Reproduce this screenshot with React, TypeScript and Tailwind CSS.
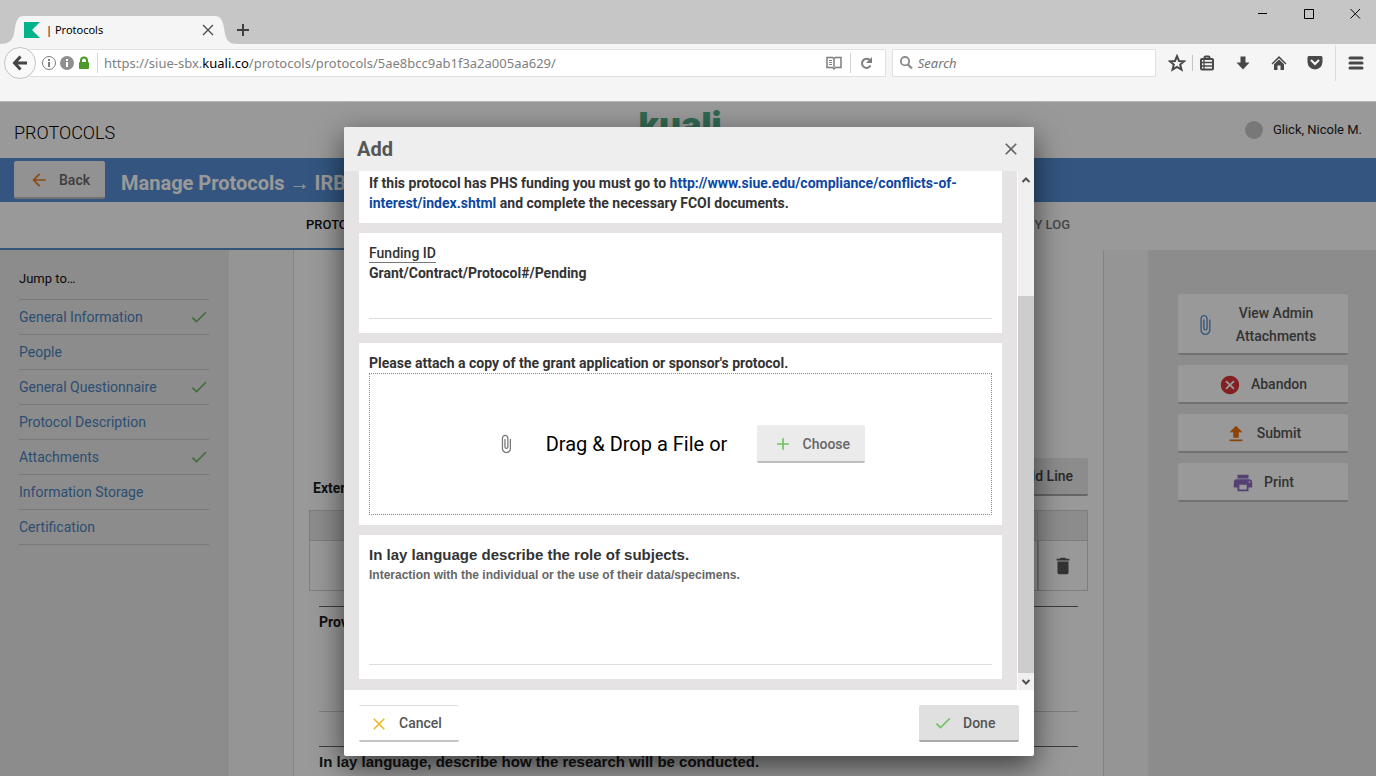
import type { ReactNode } from 'react';
import {
  MdAdd,
  MdArrowBack,
  MdAttachFile,
  MdCancel,
  MdCheck,
  MdClose,
  MdDelete,
  MdPrint,
  MdUpload,
} from 'react-icons/md';

const sections = [
  { name: 'General Information', done: true },
  { name: 'People', done: false },
  { name: 'General Questionnaire', done: true },
  { name: 'Protocol Description', done: false },
  { name: 'Attachments', done: true },
  { name: 'Information Storage', done: false },
  { name: 'Certification', done: false },
];

function BrowserTabs() {
  return (
    <div className="flex h-11 items-end justify-between bg-[#c6c6c6]">
      <div className="flex h-7 items-center">
        <svg className="h-7 w-6" viewBox="0 0 24 28" fill="#f5f5f5">
          <path d="M0 28C9 28 13 25 14.500 15C16 4 18 0 24 0V28Z" />
        </svg>
        <div className="flex h-7 w-[190px] items-center bg-[#f5f5f5]">
          <svg className="h-4 w-4" viewBox="0 0 16 16" fill="#00b388">
            <path d="M0 0H16L8 8L16 16H0Z" />
          </svg>
          <span className="ml-1.5 flex-1 text-[11px] text-black">| Protocols</span>
          <button aria-label="Close tab">
            <svg className="h-3 w-3" viewBox="0 0 12 12" stroke="#4a4a4a" strokeWidth="1.300">
              <path d="M1 1L11 11M11 1L1 11" />
            </svg>
          </button>
        </div>
        <svg className="h-7 w-6" viewBox="0 0 24 28" fill="#f5f5f5">
          <path d="M24 28C15 28 12 25 10.500 15C9 4 7 0 0 0V28Z" />
        </svg>
        <button aria-label="New tab" className="-ml-0.5">
          <svg className="h-3.5 w-3.5" viewBox="0 0 14 14" stroke="#3f3f3f" strokeWidth="2">
            <path d="M7 1V13M1 7H13" />
          </svg>
        </button>
      </div>
      <div className="flex items-center gap-8 self-start pt-2 pr-3.5">
        <button aria-label="Minimize">
          <svg className="h-3 w-3.5" viewBox="0 0 14 12" stroke="#000">
            <path d="M2 5.500H11" />
          </svg>
        </button>
        <button aria-label="Maximize">
          <svg className="h-3 w-3.5" viewBox="0 0 14 12" stroke="#000" fill="none">
            <path d="M2.500 1.500H11.500V10.500H2.500Z" />
          </svg>
        </button>
        <button aria-label="Close">
          <svg className="h-3 w-3.5" viewBox="0 0 14 12" stroke="#000">
            <path d="M2.500 1L12 10.500M12 1L2.500 10.500" />
          </svg>
        </button>
      </div>
    </div>
  );
}

function AddressBar() {
  return (
    <div className="flex h-[58px] items-start border-b border-[#b5b5b5] bg-[#f5f5f5] pr-3 text-[14px]">
      <div className="flex flex-1 items-center pt-[3px] pl-1">
        <button
          aria-label="Go back"
          className="z-10 flex h-8 w-8 items-center justify-center rounded-full border border-[#c4c4c4] bg-[#f9f9f9]"
        >
          <svg className="h-4 w-4" viewBox="0 0 16 16" fill="none" stroke="#454545" strokeWidth="3">
            <path d="M8.500 1.500L2.500 8L8.500 14.500M2.500 8H15" />
          </svg>
        </button>
        <div className="-ml-2 flex h-7 flex-1 items-center border border-[#e0e0e0] bg-white pr-2.5 pl-3">
          <svg className="mr-0.5 h-4 w-4" viewBox="0 0 16 16" fill="none" stroke="#7d7d7d">
            <circle cx="8" cy="8" r="6.500" />
            <path d="M8 7V12" strokeWidth="2" />
            <path d="M8 4V6" strokeWidth="2" />
          </svg>
          <svg className="mr-0.5 h-4 w-4" viewBox="0 0 16 16">
            <circle cx="8" cy="8" r="7" fill="#8f8f8f" />
            <path d="M8 7V12M8 4V6" stroke="#fff" strokeWidth="2" />
          </svg>
          <svg className="h-3.5 w-3.5" viewBox="0 0 14 14">
            <path d="M4 7V4.500A3 3 0 0 1 10 4.500V7" fill="none" stroke="#4c9a2a" strokeWidth="2" />
            <rect x="2" y="6" width="10" height="7" rx="1" fill="#4c9a2a" />
          </svg>
          <span className="mx-1.5 h-5 w-px bg-[#d4d4d4]" />
          <div role="textbox" aria-label="Address" className="flex-1 truncate pt-0.5 text-[13px] text-[#808080]">
            https://siue-sbx.<span className="text-black">kuali.co</span>
            /protocols/protocols/5ae8bcc9ab1f3a2a005aa629/
          </div>
          <button aria-label="Reader view">
            <svg className="h-4 w-4" viewBox="0 0 16 16" fill="none" stroke="#7d7d7d" strokeWidth="1.500">
              <path d="M1 2.500H6.500L8 3.500L9.500 2.500H15V12.500H9.500L8 14L6.500 12.500H1Z M8 4V12" />
              <path d="M3 5.500H6M3 7.500H6M3 9.500H6" strokeWidth="1" />
            </svg>
          </button>
          <span className="mx-2 h-5 w-px bg-[#d4d4d4]" />
          <button aria-label="Reload">
            <svg className="h-4 w-4" viewBox="0 0 16 16" fill="none" stroke="#7d7d7d" strokeWidth="2">
              <path d="M11 5.500A4.500 4.500 0 1 0 11.500 10.500" />
              <path d="M13 2V8H7Z" fill="#7d7d7d" stroke="none" />
            </svg>
          </button>
        </div>
      </div>
      <label className="mt-[5px] ml-1.5 flex h-7 w-[264px] items-center border border-[#e0e0e0] bg-white px-1.5">
        <svg className="mr-1 h-4 w-4" viewBox="0 0 16 16" fill="none" stroke="#8c8c8c" strokeWidth="2">
          <circle cx="6.500" cy="6" r="4.500" />
          <path d="M9.500 9.500L14 14" strokeWidth="2.500" />
        </svg>
        <input
          type="text"
          aria-label="Search"
          placeholder="Search"
          className="w-full pt-0.5 text-[13px] italic outline-none placeholder:text-[#757575]"
        />
      </label>
      <div className="flex h-[38px] items-center pl-3">
        <button aria-label="Bookmark">
          <svg className="h-[18px] w-[18px]" viewBox="0 0 18 18" fill="none" stroke="#484848" strokeWidth="2">
            <path d="M9 2.200L11 7L16 7.400L12.200 10.600L13.500 15.700L9 13L4.500 15.700L5.800 10.600L2 7.400L7 7Z" />
          </svg>
        </button>
        <span className="mx-1.5 h-4 w-px bg-[#c4c4c4]" />
        <button aria-label="Library" className="mr-5">
          <svg className="h-4 w-4" viewBox="0 0 16 16" fill="none" stroke="#484848" strokeWidth="2">
            <rect x="2" y="4" width="12" height="10.500" rx="1" />
            <path d="M5.500 3.500V2.500Q5.500 1.500 6.500 1.500H9.500Q10.500 1.500 10.500 2.500V3.500" />
            <path d="M2 7.500H14M2 11H14M5 5V14" strokeWidth="1.300" />
          </svg>
        </button>
        <button aria-label="Downloads" className="mr-5">
          <svg className="h-4 w-4" viewBox="0 0 16 16" fill="#484848">
            <path d="M5.500 1.500H10.500V7.500H14.500L8 14.500L1.500 7.500H5.500Z" />
          </svg>
        </button>
        <button aria-label="Home" className="mr-5">
          <svg className="h-4 w-4" viewBox="0 0 16 16" fill="#484848">
            <path d="M8 1L15.500 8.500L14.500 9.500L8 3.200L1.500 9.500L0.500 8.500Z" />
            <path d="M8 4.500L13 9.200V15H9.500V10.500H6.500V15H3V9.200Z" />
          </svg>
        </button>
        <button aria-label="Save to Pocket" className="mr-3">
          <svg className="h-4 w-4" viewBox="0 0 16 16">
            <path d="M2 1H14Q15.500 1 15.500 2.500V7Q15 14 8 14.500Q1 14 0.500 7V2.500Q0.500 1 2 1Z" fill="#484848" />
            <path d="M4.500 5.500L8 9L11.500 5.500" fill="none" stroke="#f5f5f5" strokeWidth="2" strokeLinecap="round" />
          </svg>
        </button>
        <span className="mr-3 h-9 w-px bg-[#dcdcdc]" />
        <button aria-label="Menu">
          <svg className="h-4 w-4" viewBox="0 0 16 16" stroke="#484848" strokeWidth="3" strokeLinecap="round">
            <path d="M2 3H14M2 8H14M2 13H14" />
          </svg>
        </button>
      </div>
    </div>
  );
}

function SideButton({ icon, children }: { icon: ReactNode; children: ReactNode }) {
  return (
    <button className="flex h-[39px] w-full items-center justify-center gap-2.5 rounded-xs border-b-2 border-[#bcbcbc] bg-white pt-0.5 text-[14px] font-medium text-[#555]">
      {icon}
      {children}
    </button>
  );
}

function ProtocolPage() {
  return (
    <div className="flex h-full flex-col bg-white">
      <header className="flex h-14 shrink-0 items-center bg-white px-3.5">
        <h1 className="flex-1 pt-1 text-[18px] font-light text-black">PROTOCOLS</h1>
        <span className="mr-4 pb-2.5 font-[Inter] text-[34px] leading-8 font-black text-[#52ae86]">kuali</span>
        <div className="flex flex-1 items-center justify-end gap-2.5 text-[13px] text-[#222]">
          <span className="h-[18px] w-[18px] rounded-full bg-[#c8c8c8]" />
          Glick, Nicole M.
        </div>
      </header>
      <div className="flex h-11 shrink-0 items-center gap-4 bg-[#558ed4] px-3.5">
        <button className="flex h-[38px] w-[91px] items-center justify-center gap-2.5 rounded-xs border-b-2 border-[#bcbcbc] bg-[#f4f4f4] pt-0.5 text-[14px] font-medium text-[#666]">
          <MdArrowBack className="h-5 w-5 text-[#e87a1d]" />
          Back
        </button>
        <h2 className="pt-1.5 text-[20px] font-bold text-white">
          Manage Protocols <span className="font-['Liberation_Sans'] font-normal">→</span> IRB
        </h2>
      </div>
      <nav className="h-12 shrink-0 bg-white text-[13px] font-medium">
        <div className="flex h-[46px] items-center justify-between px-[306px]">
          <a href="#protocol" className="text-[#111]">PROTOCOL</a>
          <a href="#activity" className="text-[#777]">ACTIVITY LOG</a>
        </div>
        <div className="h-0.5 w-1/2 bg-[#4f8fc8]" />
      </nav>
      <div className="flex flex-1 overflow-hidden">
        <aside className="w-[229px] shrink-0 bg-[#e9e9e9] pt-[19px] pr-5 pl-[19px] text-[14px]">
          <p className="h-[31px] border-b border-[#c9c9c9] text-[13px] leading-5 text-[#111]">Jump to…</p>
          <ul>
            {sections.map((section) => (
              <li key={section.name} className="flex h-[35px] items-center justify-between border-b border-[#c9c9c9]">
                <a href="#section" className="text-[#4a83bd]">{section.name}</a>
                {section.done && <MdCheck className="h-5 w-5 text-[#68b85c]" />}
              </li>
            ))}
          </ul>
        </aside>
        <main className="flex-1 overflow-hidden bg-[#f9f9f9] pr-11 pl-16">
          <div className="h-full border-x border-[#dcdcdc] bg-white px-[15px] pt-52 text-[14px] font-bold text-[#222]">
            <div className="flex items-end justify-between">
              <span className="pl-1 leading-4">External Funding</span>
              <button className="h-[38px] rounded-xs border-b-2 border-[#a8a8a8] bg-[#e9e9e9] px-[15px] font-medium text-[#444]">
                Add Line
              </button>
            </div>
            <table className="mt-3.5 w-full border border-[#d2d2d2]">
              <thead>
                <tr className="h-[30px] border-b border-[#d2d2d2] bg-[#e9e9e9]">
                  <th />
                  <th className="w-[50px] border-l border-[#d2d2d2]" />
                </tr>
              </thead>
              <tbody>
                <tr className="h-[50px]">
                  <td />
                  <td className="w-[50px] border-l-2 border-[#c4c4c4]">
                    <button aria-label="Delete line" className="flex w-full justify-center">
                      <MdDelete className="h-[22px] w-[22px] text-[#555]" />
                    </button>
                  </td>
                </tr>
              </tbody>
            </table>
            <div className="mx-2.5 mt-[15px] h-[106px] border-t border-b border-t-[#666] border-b-[#d2d2d2] pt-[5px]">
              Provide
            </div>
            <div className="mx-2.5 mt-[34px] border-t border-[#666] pt-[5px] font-['Liberation_Sans'] text-[15px] leading-5">
              In lay language, describe how the research will be conducted.
            </div>
          </div>
        </main>
        <aside className="flex w-[228px] shrink-0 flex-col gap-2.5 bg-[#e9e9e9] pt-11 pr-7 pl-[30px]">
          <button className="flex h-[61px] items-center rounded-xs border-b-2 border-[#bcbcbc] bg-white pt-0.5 text-[14px] leading-[23px] font-medium text-[#555]">
            <MdAttachFile className="ml-4 h-[22px] w-[22px] shrink-0 text-[#5c94d0]" />
            <span className="flex-1 pr-3">
              View Admin
              <br />
              Attachments
            </span>
          </button>
          <SideButton icon={<MdCancel className="h-[22px] w-[22px] text-[#dd3439]" />}>Abandon</SideButton>
          <SideButton icon={<MdUpload className="h-[22px] w-[22px] text-[#e8710a]" />}>Submit</SideButton>
          <SideButton icon={<MdPrint className="h-[22px] w-[22px] text-[#8c6cc0]" />}>Print</SideButton>
        </aside>
      </div>
    </div>
  );
}

function AddDialog() {
  return (
    <div
      role="dialog"
      aria-label="Add"
      className="w-full max-w-[690px] overflow-hidden rounded-xs bg-white shadow-[0_10px_30px_rgba(0,0,0,0.6)]"
    >
      <div className="flex h-11 items-center justify-between bg-[#eee] px-[13px]">
        <h2 className="text-[20px] font-bold text-[#555]">Add</h2>
        <button aria-label="Close dialog">
          <MdClose className="h-5 w-5 text-[#666]" />
        </button>
      </div>
      <div className="flex bg-[#e5e3e4]">
        <form className="flex flex-1 flex-col gap-2.5 px-[15px] pb-[11px] text-[14px] leading-5 font-bold text-[#333]">
          <p className="bg-white px-2.5 pt-0.5 pb-2.5">
            If this protocol has PHS funding you must go to{' '}
            <a href="#coi" className="text-[#0d47a1]">
              http://www.siue.edu/compliance/conflicts-of-interest/index.shtml
            </a>{' '}
            and complete the necessary FCOI documents.
          </p>
          <div className="bg-white px-2.5 pt-2.5 pb-3.5">
            <label htmlFor="funding" className="block">
              <span className="inline-block h-5 border-b border-[#777] font-medium">Funding ID</span>
              <br />
              Grant/Contract/Protocol#/Pending
            </label>
            <input id="funding" type="text" className="block h-9 w-full border-b border-[#ddd] font-normal outline-none" />
          </div>
          <div className="bg-white p-2.5">
            <p>Please attach a copy of the grant application or sponsor's protocol.</p>
            <div className="flex h-[142px] items-center justify-center border border-dotted border-[#888] font-normal">
              <MdAttachFile className="mr-[30px] h-5 w-5 text-[#777]" />
              <span className="mr-[30px] text-[20px] text-black">Drag &amp; Drop a File or</span>
              <button
                type="button"
                className="flex h-[38px] w-[108px] items-center justify-center gap-2.5 rounded-xs border-b-2 border-[#bdbdbd] bg-[#ebebeb] pt-0.5 font-medium text-[#666]"
              >
                <MdAdd className="h-5 w-5 text-[#6fc162]" />
                Choose
              </button>
            </div>
          </div>
          <div className="bg-white px-2.5 pt-2.5 pb-3.5 font-['Liberation_Sans']">
            <label htmlFor="role" className="block">
              <span className="block text-[15px]">In lay language describe the role of subjects.</span>
              <span className="block text-[12px] leading-5 text-[#666]">
                Interaction with the individual or the use of their data/specimens.
              </span>
            </label>
            <textarea id="role" className="block h-20 w-full resize-none border-b border-[#ddd] font-normal outline-none" />
          </div>
        </form>
        <div aria-hidden="true" className="flex w-[17px] flex-col border-l border-white bg-[#f0f0f0]">
          <svg className="h-[17px] w-4" viewBox="0 0 16 17" fill="none" stroke="#505050" strokeWidth="2">
            <path d="M4.500 11L8 7.500L11.500 11" />
          </svg>
          <div className="mt-[108px] flex-1 bg-[#cdcdcd]" />
          <svg className="h-[17px] w-4" viewBox="0 0 16 17" fill="none" stroke="#505050" strokeWidth="2">
            <path d="M4.500 7L8 10.500L11.500 7" />
          </svg>
        </div>
      </div>
      <div className="flex h-[66px] items-center justify-between px-[15px] text-[14px] font-medium text-[#555]">
        <button className="flex h-[37px] w-[100px] items-center gap-2.5 rounded-xs border-t border-b-2 border-t-[#ddd] border-b-[#c4c4c4] bg-white pt-0.5 pl-2.5">
          <MdClose className="h-5 w-5 text-[#efbd30]" />
          Cancel
        </button>
        <button className="flex h-[37px] w-[100px] items-center gap-2.5 rounded-xs border-b-2 border-[#aaa] bg-[#e0e0e0] pt-0.5 pl-3.5">
          <MdCheck className="h-5 w-5 text-[#6fc162]" />
          Done
        </button>
      </div>
    </div>
  );
}

export default function App() {
  return (
    <div className="flex h-screen flex-col overflow-hidden font-[Roboto,sans-serif]">
      <div className="shrink-0 font-['Noto_Sans',sans-serif]">
        <BrowserTabs />
        <AddressBar />
      </div>
      <div className="relative flex-1 overflow-hidden">
        <ProtocolPage />
        <div className="absolute inset-0 flex items-start justify-center bg-black/40 pt-[25px] pl-0.5">
          <AddDialog />
        </div>
      </div>
    </div>
  );
}
